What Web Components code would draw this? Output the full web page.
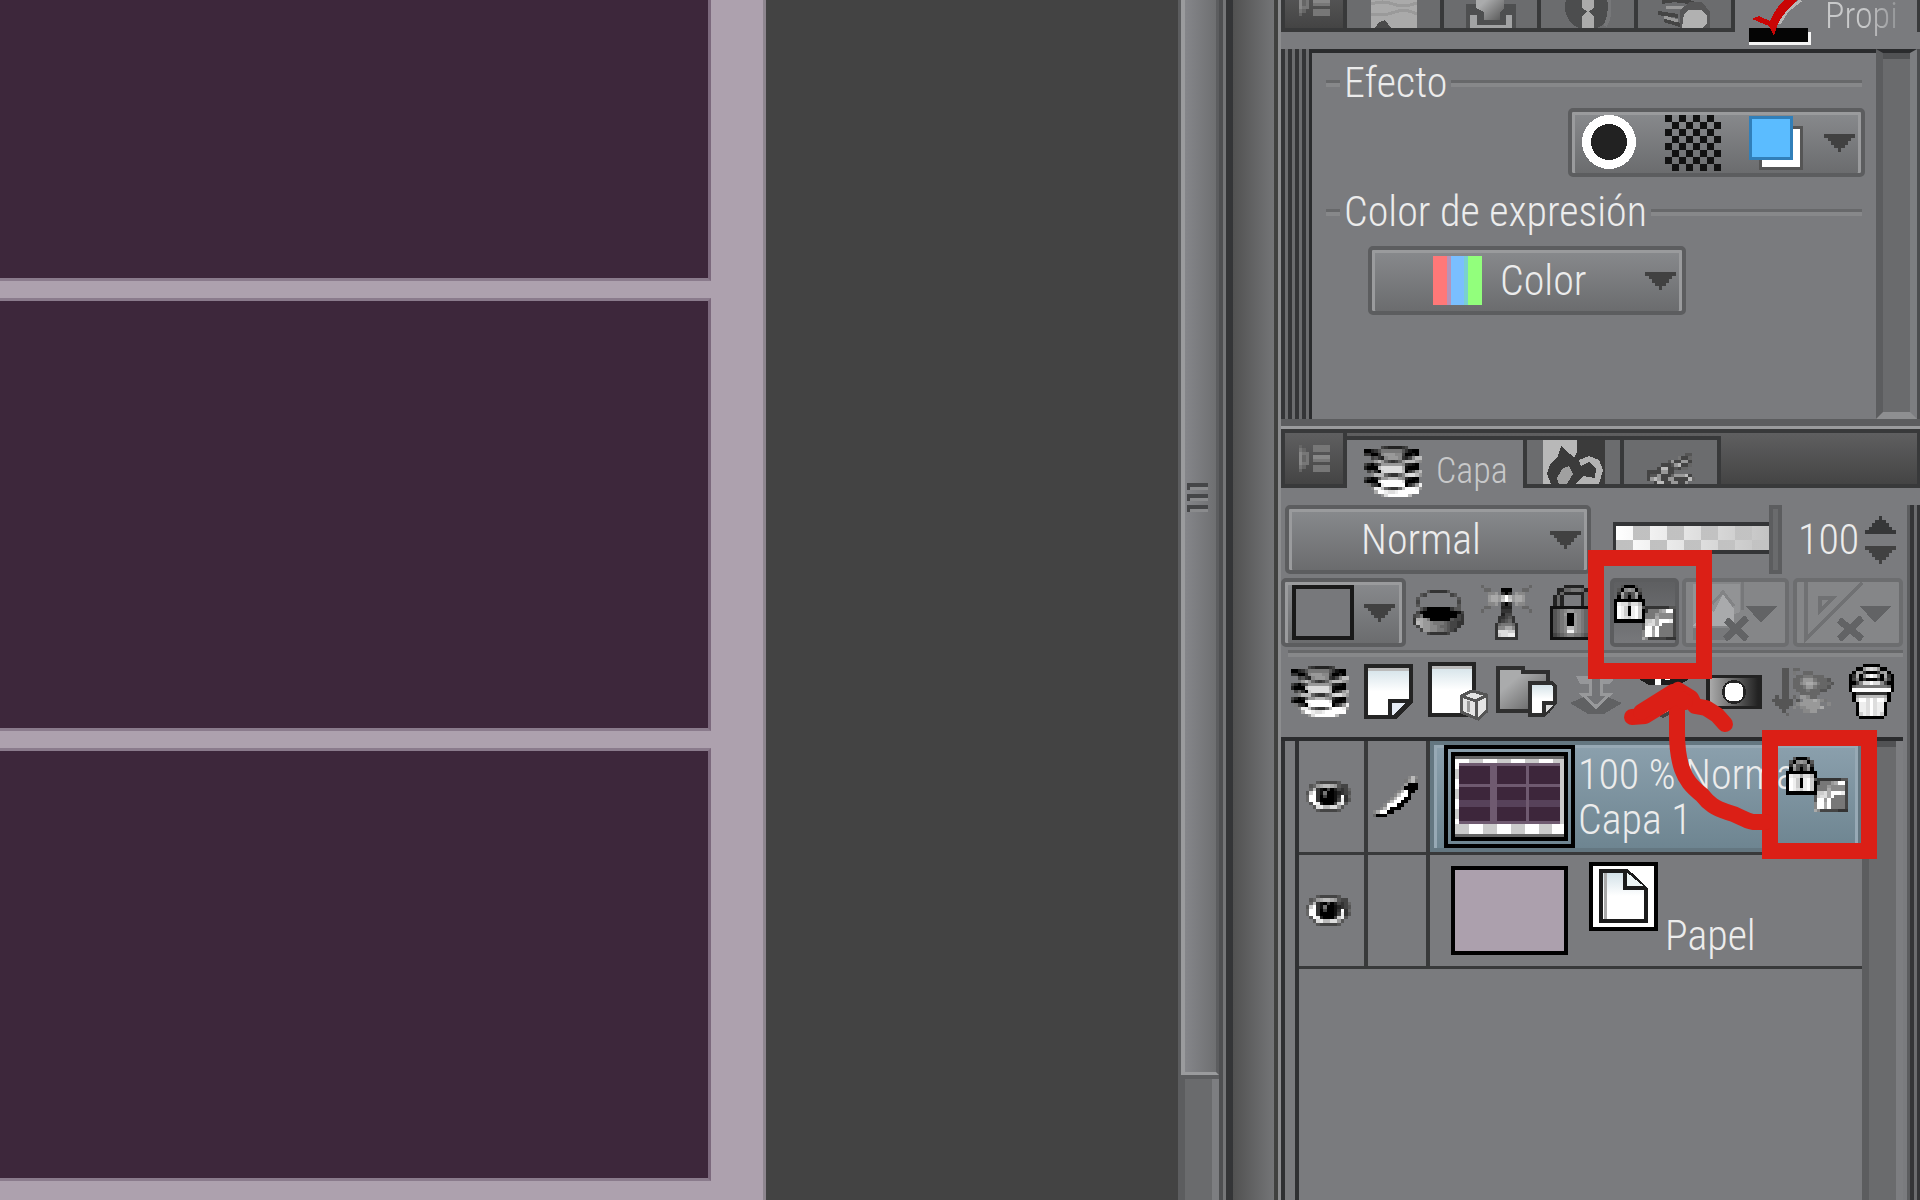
<!DOCTYPE html>
<html lang="es">
<head>
    <meta charset="utf-8">
    <title>Capa</title>
    <style>
        body {
            margin: 0;
            background: #434343;
            color: #ececec;
            font: 350 42px/48px "Liberation Sans Narrow", "Roboto Condensed", "Liberation Sans", sans-serif;
            overflow: hidden;
        }
    </style>
</head>

<body>
    <paint-app></paint-app>
</body>

<script>
    (function () {

        // one icon cell is 24/7 of a pixel, hex digits are grey levels
        const CELL = 24 / 7;

        const PIXELS = {
            eye: [
                '...5444445...',
                '.569abba9544.',
                '.6b3104024346',
                '5cf3170012345',
                '6ff3040013f36',
                '6ff3000014e35',
                '.5fe20004ce5.',
                '..5debbdd95..',
                '...5444445...',
            ],
            pen: [
                '..........8b8',
                '.........79b7',
                '.........9000',
                '........80000',
                '.......8bf00.',
                '......8bff0..',
                '.....8bff00..',
                '....8bff00...',
                '...8fff00....',
                '..8bf000.....',
                '8aff00.......',
                '6000.........',
            ],
            lockAlpha: [
                '..50005...........',
                '.5089805..........',
                '.3a535a3..........',
                '.0950590..........',
                '000000000.........',
                '0eddaddb0.........',
                '0fec0efc5333333355',
                '0fec0efc037779aff4',
                '0fec0efc0777988884',
                '0fedcefc0777a88884',
                '000000000ccdafffe4',
                '........5cddaf7774',
                '........5ff9f77774',
                '........8ffaf77774',
                '........8ffaf77774',
                '........a844444333',
            ],
            stack: [
                '.....43222234....',
                '0023577777753100.',
                '3300389998840020.',
                '..4532899983248bb',
                '..79b9643469bbb98',
                '4203599999983210.',
                '2000bdddddda1000.',
                '.4630cdddddb0359b',
                '..8bbb643368cddb9',
                '4201599bbb983100.',
                '2000dffffffd1001.',
                '.7430effffff0359e',
                '..8eeb64336bfffe9',
                '...affeddeffffff.',
                '.....9dffffffb...',
            ],
            menu: [
                '6...77777',
                '76..77777',
                '877......',
                '867.88888',
                '867.77777',
                '877......',
                '76..77777',
                '6...77777',
            ],
            pot: [
                '....5333335....',
                '..54.......45..',
                '.5...........5.',
                '.4...........4.',
                '.5...........5.',
                '..530000000355.',
                '.41000000000014',
                '457000000000043',
                '3aa970000005443',
                '3ba998777654433',
                '.4a99887665443.',
                '..49988776543..',
                '....4333334....',
            ],
            beacon: [
                '6.............6',
                '.66...000...66.',
                '..889.303.988..',
                '..9aa9bfb9aa9..',
                '..9aa9cfc9aa9..',
                '..889.303.988..',
                '.66...222...66.',
                '6.....333.....6',
                '......244......',
                '.....33453.....',
                '.....34563.....',
                '....3677763....',
                '....388aa83....',
                '....3dddcc3....',
                '....3cddee3....',
                '....3333333....',
            ],
            lock: [
                '....222222....',
                '..2266777622..',
                '..2622222262..',
                '.262.....262..',
                '.262.....262..',
                '.262.....262..',
                '11111111111111',
                '15678998876541',
                '15679009876541',
                '15678009876541',
                '15678009876541',
                '15678009876541',
                '15678bb9876541',
                '15678ee9876541',
                '14567887765441',
                '11111111111111',
            ],
            trash: [
                '....00000....',
                '..009cdc900..',
                '.0a9300039a0.',
                '03a08dfd80a30',
                '0480300030840',
                '0048ddfdd8400',
                '0677777777760',
                '0fffffffffff0',
                '.03333333330.',
                '.0abbbbbbba0.',
                '.0cffdfdffc0.',
                '..0eedfdee0..',
                '..0eedfdee0..',
                '..0eedfdee0..',
                '..0cedfdec0..',
                '...0000000...',
            ],
            apply: [
                '...55.66..........',
                '...55.7..666......',
                '...55..66777666...',
                '...55.66799976665.',
                '...55.6689aa976665',
                '...55.66679976665.',
                '...55..666766655..',
                '...55...666666....',
                '.5.55.6.99866.....',
                '555555.5.999a987..',
                '.55555.8999999..8.',
                '..555.8.889999a...',
                '...5.....8899.....',
                '....6.............',
            ],
            brush: [
                '...........55.',
                '.........7446.',
                '......5944994.',
                '....44459b446.',
                '...4bb445466..',
                '44449944......',
                '45594446999b4.',
                '49b944994444b6',
                '..4bb4499449..',
            ],
        };

        const DRAWN = {
            page: {
                w: 49, h: 55,
                body: `<path d="M2 2H47V38L32 53H2Z" fill="url(#sky)" stroke="#242424" stroke-width="4"/>
                    <path d="M4 5H45" stroke="#bbb" stroke-width="3"/><path d="M26 53V37H47L30 53Z" fill="#e6ecf5" stroke="#242424" stroke-width="4"/>`,
            },
            pageVector: {
                w: 60, h: 59,
                body: `<path d="M2 2H46V53H2Z" fill="url(#sky)" stroke="#242424" stroke-width="4"/><path d="M4 5H44" stroke="#bbb" stroke-width="3"/>
                    <path d="M33 34L44 29L59 33V49L50 57L33 50Z" fill="#e4e4e4" stroke="#555" stroke-width="3"/><path d="M33 34L48 39L59 33M48 39V57" fill="none" stroke="#555" stroke-width="3"/><path d="M40 39V50" stroke="#999" stroke-width="3"/>`,
            },
            folder: {
                w: 62, h: 52,
                body: `<path d="M2 2H27V6H52V45H2Z" fill="url(#metal)" stroke="#2f2f2f" stroke-width="4"/>
                    <path d="M34 17H56L59 20V37L48 49H34Z" fill="url(#sky)" stroke="#2f2f2f" stroke-width="4"/><path d="M48 49V37H59" fill="#ddd" stroke="#2f2f2f" stroke-width="4"/>`,
            },
            merge: {
                w: 52, h: 52,
                body: `<path d="M0 37L14 31H38L52 37L34 48H18Z" fill="#606163"/><path d="M6 10L46 10L40 18H10Z" fill="#96979a"/>
                    <path d="M20 4H31V28H40L26 41L12 28H20Z" fill="#737477" stroke="#98999b" stroke-width="3"/>`,
            },
            mask: {
                w: 56, h: 52,
                body: `<path d="M0 12L10 6H46L54 12L42 19H12Z" fill="#1c1c1c"/><path d="M18 2H24V19H18ZM28 4H33V14H28Z" fill="#fff"/><path d="M12 36H40L34 48L26 52L16 46Z" fill="#444"/><path d="M18 36H34V44L26 48L18 44Z" fill="#fff"/>`,
            },
            maskArea: {
                w: 56, h: 34,
                body: `<rect width="56" height="34" fill="#222"/><rect x="4" y="3" width="48" height="28" fill="url(#fade)"/><circle cx="28" cy="17" r="12" fill="#222"/><rect x="19" y="8" width="18" height="18" rx="6" fill="#fff"/>`,
            },
            ruler: {
                w: 88, h: 62,
                body: `<path d="M1 48V2H48V30" fill="#929395"/><path d="M50 0V28" stroke="#77787a" stroke-width="3"/><path d="M1 44L16 28L22 30L31 12L42 27V44Z" fill="#a9aaac"/>
                    <path d="M1 46H38V58H1Z" fill="#77787a"/><path d="M20 22L31 10L42 24" fill="none" stroke="#828385" stroke-width="3"/><path d="M34 38L55 57M55 36L33 57" stroke="#626365" stroke-width="7"/><path d="M54 24H85L69 41Z" fill="#626365"/>`,
            },
            snap: {
                w: 88, h: 62,
                body: `<path d="M2 0V57L58 1" fill="none" stroke="#707173" stroke-width="4"/><path d="M16 16H29L16 29Z" fill="none" stroke="#707173" stroke-width="4"/>
                    <path d="M35 38L58 57M58 36L35 57" stroke="#626365" stroke-width="7"/><path d="M56 24H87L71 41Z" fill="#626365"/>`,
            },
            ring: {
                w: 55, h: 55,
                body: `<circle cx="27" cy="27" r="27" fill="#fff"/><circle cx="27" cy="27" r="18" fill="#222"/>`,
            },
            tone: {
                w: 56, h: 56,
                body: Array.from({ length: 64 }, (_, i) => [i % 8, Math.floor(i / 8)]).filter(([x, y]) => (x + y) % 2 === 0)
                    .map(([x, y]) => `<rect x="${x * 7}" y="${y * 7}" width="7" height="7" fill="#111"/>`).join(''),
            },
            layerColor: {
                w: 55, h: 55,
                body: `<rect x="12" y="12" width="41" height="41" fill="#fff" stroke="#555" stroke-width="3"/><rect x="2" y="2" width="41" height="41" fill="#5bbcff" stroke="#317fb9" stroke-width="3"/>`,
            },
            rgb: {
                w: 49, h: 49,
                body: `<path fill="#ff7878" d="M0 0h14v49H0z"/><path fill="#b793b8" d="M14 0h4v49h-4z"/><path fill="#7abfff" d="M18 0h13v49H18z"/><path fill="#7ad0d0" d="M31 0h4v49h-4z"/><path fill="#92ff7c" d="M35 0h14v49H35z"/>`,
            },
            swatch: {
                w: 62, h: 55,
                body: `<rect x="2" y="2" width="58" height="51" fill="#77787b" stroke="#191919" stroke-width="4"/>`,
            },
            down: {
                w: 31, h: 18,
                body: `<path d="M0 0H31V4H27V7H24V11H21V14H17V18H14V14H10V11H7V7H4V4H0Z" fill="#414141"/>`,
            },
            up: {
                w: 31, h: 18,
                body: `<path d="M0 18H31V14H27V11H24V7H21V4H17V0H14V4H10V7H7V11H4V14H0Z" fill="#363738"/>`,
            },
            sheet: {
                w: 69, h: 69,
                body: `<rect x="2" y="2" width="65" height="65" fill="#fff" stroke="#000" stroke-width="4"/><path d="M12 9H38L57 27V59H12Z" fill="url(#sky)" stroke="#1c1c1c" stroke-width="4"/>
                    <path d="M16 11V57" stroke="#aaa" stroke-width="3"/><path d="M36 9V26H57" fill="#edf5f6" stroke="#1c1c1c" stroke-width="4"/>`,
            },
            check: {
                w: 62, h: 72,
                body: `<path d="M0 64H58V58H62V71H0Z" fill="#f5f5f5"/><rect y="54" width="59" height="14" fill="#050505"/>
                    <path d="M30 50L38 37L52 26" fill="none" stroke="#b8b8b8" stroke-width="3"/><path d="M3 45L10 42L21 47C28 30 38 22 50 20L54 22C44 30 34 38 28 52L25 62L20 52Z" fill="#c90505"/>`,
            },
            photo: {
                w: 46, h: 44,
                body: `<rect width="46" height="44" fill="#aaa"/><path d="M0 20Q12 16 22 20T46 19M0 30Q14 32 24 28T46 30" fill="none" stroke="#9a9a9a" stroke-width="3"/><path d="M4 44L8 38L14 36L20 44Z" fill="#4a4a4a"/>`,
            },
            stamp: {
                w: 50, h: 50,
                body: `<path d="M0 26H10V10H38V26H50V50H0Z" fill="#4e4f50"/><path d="M4 37H11V47H40V37H46V50H4Z" fill="#a2a3a4"/><path d="M10 16H38V31L34 34V42H18V34L10 30Z" fill="url(#metal)"/>`,
            },
            info: {
                w: 46, h: 50,
                body: `<circle cx="23" cy="29" r="23" fill="#4c4d4e"/><path d="M17 18H29V30L23 34L17 30ZM17 38L23 33L29 38V50H17Z" fill="#ababab"/><path d="M42 14C46 24 46 38 40 48" fill="none" stroke="#767779" stroke-width="4"/>`,
            },
            spray: {
                w: 54, h: 50,
                body: `<path d="M4 24Q18 20 38 26M0 35L20 38M6 42L22 47" fill="none" stroke="#444" stroke-width="4"/><path d="M8 29L30 30M6 39L20 43" stroke="#999" stroke-width="3"/><path d="M22 32L32 24H44L52 34V50H22Z" fill="#565657"/><path d="M26 36L31 32H44L49 38V46L44 50H24Z" fill="#b1b1b1"/>`,
            },
            history: {
                w: 62, h: 44,
                body: `<rect width="62" height="44" fill="#3b3b3b"/><path d="M0 0H34V12L31 18L27 14L18 6L15 16L7 24L4 34L8 44H0Z" fill="#b8b8b8"/>
                    <path d="M14 38L20 28L26 26L30 34L24 44H16Z" fill="#a0a0a0"/><path d="M36 20L46 16L56 20L60 30L56 44H32L40 36L52 38L53 28L46 22L38 26Z" fill="#b3b3b3"/>`,
            },
        };

        const defs = `<defs>
            <linearGradient id="sky" x1="0" y1="0" x2="0" y2="1"><stop offset="0" stop-color="#cfdfe6"/><stop offset=".5" stop-color="#fff"/></linearGradient>
            <linearGradient id="metal" x1="0" y1="0" x2="1" y2="1"><stop offset=".3" stop-color="#aaabac"/><stop offset="1" stop-color="#555"/></linearGradient>
            <linearGradient id="fade"><stop offset="0" stop-color="#aaa"/><stop offset="1" stop-color="#222"/></linearGradient>
        </defs>`;

        function define(name, html, setup) {
            const template = document.createElement('template');
            template.innerHTML = `<style>:host { display: block; box-sizing: border-box; } *, *::before { box-sizing: border-box; }</style>` + html;

            window.customElements.define(name, class extends HTMLElement {
                constructor() {
                    super();
                    this.attachShadow({ mode: 'open' });
                    this.shadowRoot.appendChild(template.content.cloneNode(true));
                }

                connectedCallback() {
                    if (setup)
                        setup(this, this.shadowRoot);
                }
            });
        }

        define('ui-icon', `
            <style>
                :host { display: block; flex: none; }
                svg { display: block; shape-rendering: crispEdges; }
            </style>
            <span></span>
        `, (host, root) => {
            const name = host.getAttribute('name');
            const rows = PIXELS[name];
            let w, h, box, body;
            if (rows) {
                const cols = rows[0].length;
                w = Math.round(cols * CELL);
                h = Math.round(rows.length * CELL);
                box = `${cols} ${rows.length}`;
                body = rows.map((row, y) => [...row].map((c, x) =>
                    c === '.' ? '' : `<rect x="${x}" y="${y}" width="1" height="1" fill="#${c}${c}${c}"/>`).join('')).join('');
            } else {
                ({ w, h, body } = DRAWN[name]);
                box = `${w} ${h}`;
                body = defs + body;
            }
            root.querySelector('span').innerHTML =
                `<svg width="${w}" height="${h}" viewBox="0 0 ${box}" preserveAspectRatio="none" aria-hidden="true">${body}</svg>`;
        });

        // bevelled frame shared by drop-downs and button groups
        define('bevel-box', `
            <style>
                :host {
                    position: relative;
                    display: flex;
                    align-items: center;
                    height: 69px;
                    flex: none;
                    border: 4px solid #5c5d5f;
                    border-radius: 5px;
                    background: linear-gradient(#888a8d, #6b6c6e);
                    box-shadow: inset 3px 0 #9a9b9d, inset -3px 0 #9a9b9d, inset 0 3px #9a9b9d;
                }
                :host([flat]) { background: #858688; border-color: #6c6d6f; box-shadow: none; }
                :host([pressed]) { background: linear-gradient(#5e5f61, #77787b); box-shadow: none; }
            </style>
            <slot></slot>
        `);

        define('drop-down', `
            <style>
                bevel-box { width: 100%; }
                select {
                    appearance: none;
                    width: 100%;
                    height: 100%;
                    border: 0;
                    outline: 0;
                    background: none;
                    color: inherit;
                    font: inherit;
                    padding: 0 0 0 var(--indent);
                }
                .arrow { position: absolute; right: 6px; pointer-events: none; }
                .lead { display: block; position: absolute; left: 61px; pointer-events: none; }
            </style>
            <bevel-box>
                <slot class="lead"></slot>
                <select><option></option></select>
                <ui-icon class="arrow" name="down"></ui-icon>
            </bevel-box>
        `, (host, root) => {
            root.querySelector('option').textContent = host.getAttribute('value');
            root.querySelector('select').setAttribute('aria-label', host.getAttribute('label'));
        });

        define('icon-button', `
            <style>
                :host { flex: none; width: 69px; height: 69px; }
                button {
                    display: flex;
                    align-items: center;
                    justify-content: center;
                    gap: 10px;
                    width: 100%;
                    height: 100%;
                    padding: 0;
                    border: 0;
                    background: none;
                }
            </style>
            <button type="button"><slot></slot></button>
        `, (host, root) => {
            root.querySelector('button').setAttribute('aria-label', host.getAttribute('label'));
            root.querySelector('button').disabled = host.hasAttribute('disabled');
        });

        define('group-box', `
            <style>
                header { display: flex; align-items: center; gap: 4px; white-space: nowrap; }
                header::before { content: ""; width: 14px; }
                header::before, i { height: 7px; background: linear-gradient(#67686a 50%, #87888a 50%); }
                i { flex: 1; }
            </style>
            <header><span></span><i></i></header>
            <slot></slot>
        `, (host, root) => {
            root.querySelector('span').textContent = host.getAttribute('label');
        });

        define('scroll-rail', `
            <style>
                :host {
                    flex: none;
                    width: 41px;
                    border-left: 7px solid #5c5d5f;
                    border-right: 7px solid #7d7e81;
                    background: #6a6b6d;
                    box-shadow: inset 0 6px #515254;
                }
            </style>
        `);

        define('palette-tab', `
            <style>
                :host { flex: none; width: 97px; height: 52px; }
                button {
                    display: flex;
                    align-items: flex-end;
                    justify-content: center;
                    gap: 14px;
                    width: 100%;
                    height: 100%;
                    padding: 0;
                    border: solid #38393a;
                    border-width: 4px 4px 4px 0;
                    background: #6b6c6e;
                    color: #c8c9ca;
                    font: 350 36px/40px "Liberation Sans Narrow", "Roboto Condensed", "Liberation Sans", sans-serif;
                }
                :host([active]) { width: 180px; }
                :host([active]) button {
                    align-items: center;
                    justify-content: flex-start;
                    padding: 14px 0 0 17px;
                    background: #7a7b7e;
                    border-bottom: 0;
                }
                :host([cut]) { flex: 1; min-width: 0; overflow-x: clip; }
                :host([cut]) button {
                    align-items: flex-end;
                    padding: 0 0 0 14px;
                    border-right: 0;
                }
                :host([cut]) ::slotted(span) {
                    -webkit-mask: linear-gradient(90deg, #000 40px, transparent 90px);
                    margin-bottom: -4px;
                }
                :host([cut]) ::slotted(ui-icon) { margin-bottom: -14px; }
            </style>
            <button type="button" role="tab"><slot></slot></button>
        `);

        define('palette-tabs', `
            <style>
                :host {
                    display: flex;
                    align-items: flex-end;
                    height: 55px;
                    flex: none;
                    border-right: 3px solid #38393a;
                    background: linear-gradient(#5f5f60, #444 51px, #38393a 51px);
                }
                :host([cropped]) { height: 32px; background: #7a7b7e; }
                .menu {
                    display: flex;
                    flex: none;
                    width: 66px;
                    height: 55px;
                    padding: 12px 0 0 14px;
                    border: solid #38393a;
                    border-width: 0 4px 4px;
                    background: linear-gradient(#5f5f60, #444);
                }
            </style>
            <button class="menu" type="button" aria-label="Menú"><ui-icon name="menu"></ui-icon></button>
            <slot></slot>
        `);

        define('property-palette', `
            <style>
                :host { flex: none; background: #7a7b7e; }
                .body { display: flex; height: 370px; margin-top: 17px; border-right: 3px solid #4c4d4f; }
                .grip { width: 28px; flex: none; background: repeating-linear-gradient(90deg, #343537 0 4px, #6b6c6e 4px 7px); }
                .fields {
                    flex: 1;
                    display: flex;
                    flex-direction: column;
                    gap: 11px;
                    padding: 6px 14px 0;
                    border: solid #2a2b2d;
                    border-width: 4px 0 0 3px;
                }
                .effects { display: flex; gap: 28px; width: 297px; margin: 1px -3px 0 auto; padding-left: 10px; }
                .effects icon-button { width: 55px; height: 55px; }
                .effects icon-button:last-child { width: 31px; margin-left: -7px; }
                drop-down { width: 318px; margin: 10px 0 0 42px; --indent: 128px; }
                scroll-rail { border-top: 4px solid #2a2b2d; border-bottom: 7px solid #8e8f91; }
                .foot { height: 10px; background: linear-gradient(#5c5d5f 7px, #9a9b9d 7px); }
            </style>
            <palette-tabs cropped>
                <palette-tab><ui-icon name="photo"></ui-icon></palette-tab>
                <palette-tab><ui-icon name="stamp"></ui-icon></palette-tab>
                <palette-tab><ui-icon name="info"></ui-icon></palette-tab>
                <palette-tab><ui-icon name="spray"></ui-icon></palette-tab>
                <palette-tab active cut><ui-icon name="check"></ui-icon><span>Propi</span></palette-tab>
            </palette-tabs>
            <div class="body">
                <div class="grip"></div>
                <div class="fields">
                    <group-box label="Efecto">
                        <bevel-box class="effects">
                            <icon-button label="Borde"><ui-icon name="ring"></ui-icon></icon-button>
                            <icon-button label="Trama"><ui-icon name="tone"></ui-icon></icon-button>
                            <icon-button label="Color de capa"><ui-icon name="layerColor"></ui-icon></icon-button>
                            <icon-button label="Más efectos"><ui-icon name="down"></ui-icon></icon-button>
                        </bevel-box>
                    </group-box>
                    <group-box label="Color de expresión">
                        <drop-down label="Color de expresión" value="Color"><ui-icon name="rgb"></ui-icon></drop-down>
                    </group-box>
                </div>
                <scroll-rail></scroll-rail>
            </div>
            <div class="foot"></div>
        `);

        define('opacity-slider', `
            <style>
                :host { display: flex; align-items: center; flex: 1; min-width: 0; }
                input { appearance: none; margin: 0; background: none; }
                .range { width: 169px; height: 69px; flex: none; }
                .range::-webkit-slider-runnable-track {
                    height: 69px;
                    background:
                        linear-gradient(#343537, #343537) 0 17px / 156px 4px no-repeat,
                        linear-gradient(#343537, #343537) 0 45px / 156px 4px no-repeat,
                        linear-gradient(#343537, #343537) 0 17px / 3px 32px no-repeat,
                        linear-gradient(90deg, transparent, #c3c3c3) 3px 21px / 153px 24px no-repeat,
                        conic-gradient(#c0c0c0 25%, #fff 0 50%, #c0c0c0 0 75%, #fff 0) 3px 21px / 34px 28px repeat-x;
                }
                .range::-webkit-slider-thumb {
                    appearance: none;
                    width: 13px;
                    height: 69px;
                    border: 4px solid #5c5d5f;
                    background: #6a6b6d;
                }
                .value { width: 67px; padding: 0; border: 0; margin-left: 16px; font: inherit; color: inherit; outline: 0; }
                .spin { display: flex; flex-direction: column; gap: 12px; }
                .spin icon-button { width: 31px; height: 18px; }
            </style>
            <input class="range" type="range" min="0" max="100" value="100" aria-label="Opacidad">
            <input class="value" type="text" value="100" aria-label="Valor de opacidad">
            <div class="spin">
                <icon-button label="Subir"><ui-icon name="up"></ui-icon></icon-button>
                <icon-button label="Bajar"><ui-icon name="down"></ui-icon></icon-button>
            </div>
        `);

        define('layer-row', `
            <style>
                :host { display: flex; height: 114px; border-bottom: 3px solid #38393a; }
                .cell { display: flex; flex: none; width: 69px; border-right: 4px solid #38393a; }
                .cell.tool { width: 62px; }
                .cell icon-button { width: 58px; height: 100%; }
                slot[name] { display: block; height: 100%; }
                ::slotted([slot=tool]) { width: 54px; height: 100%; }
                .main { position: relative; display: flex; flex: 1; min-width: 0; padding: 7px 0 0 17px; border: 4px solid transparent; }
                :host([selected]) .main {
                    padding: 0 76px 0 10px;
                    background: linear-gradient(#8ba0ad, #6e8591);
                    border-color: #647781;
                    box-shadow: inset 3px 0 #97a9b5, inset 0 3px #97a9b5, inset -3px 0 #97a9b5;
                }
            </style>
            <div class="cell"><icon-button label="Visible"><ui-icon name="eye"></ui-icon></icon-button></div>
            <div class="cell tool"><slot name="tool"></slot></div>
            <div class="main"><slot></slot></div>
        `);

        define('layer-palette', `
            <style>
                :host { display: flex; flex-direction: column; flex: 1; min-height: 0; background: #7a7b7e; border-top: 4px solid #38393a; }
                .body { display: flex; flex: 1; min-height: 0; padding-top: 17px; }
                .rails { flex: none; width: 17px; background: linear-gradient(90deg, #7a7b7e 4px, #5c5d5f 4px 7px, #343537 7px 11px, #6b6c6e 11px 14px, #343537 14px); }
                .content { display: flex; flex-direction: column; flex: 1; min-width: 0; }
                .row { display: flex; flex: none; }
                .blend { gap: 22px; padding-left: 4px; }
                drop-down { width: 306px; --indent: 72px; }
                .modes { margin-top: 4px; }
                .modes > icon-button { width: 68px; padding-right: 4px; }
                .modes bevel-box icon-button { width: 100%; height: 100%; }
                .color { width: 125px; }
                .locked { width: 69px; }
                .ruler { width: 107px; margin: 0 4px 0 3px; }
                .snap { flex: 1; min-width: 0; }
                hr { width: calc(100% - 7px); height: 7px; margin: 3px 0 0 auto; border: 0; background: linear-gradient(#67686a 50%, #87888a 50%); }
                .tools { height: 80px; padding-left: 4px; }
                .list { display: flex; flex: 1; min-height: 0; border: solid #2a2b2d; border-width: 4px 0 0; }
                .gutter { flex: none; width: 18px; border: solid #2f3032; border-width: 0 4px; }
                .layers { flex: 1; min-width: 0; }
                .frame { flex: none; width: 131px; height: 103px; padding: 3px; border: 4px solid #000; }
                .thumb { width: 117px; height: 89px; border: 4px solid #000; background: #aca0ad; flex: none; }
                .frame .thumb { background: #666; padding: 3px 0; }
                svg { display: block; width: 100%; height: 100%; }
                .text { flex: 1; min-width: 0; padding-top: 7px; margin-left: 3px; line-height: 45px; white-space: nowrap; }
                .flag { position: absolute; right: 10px; top: 12px; }
                .paper { margin-left: 21px; margin-top: -4px; }
                .name { align-self: flex-end; margin: 0 0 2px 7px; }
            </style>
            <palette-tabs>
                <palette-tab active><ui-icon name="stack"></ui-icon><span>Capa</span></palette-tab>
                <palette-tab><ui-icon name="history"></ui-icon></palette-tab>
                <palette-tab><ui-icon name="brush"></ui-icon></palette-tab>
            </palette-tabs>
            <div class="body">
                <div class="content">
                    <div class="row blend">
                        <drop-down label="Modo de fusión" value="Normal"></drop-down>
                        <opacity-slider></opacity-slider>
                    </div>
                    <div class="row modes">
                        <bevel-box class="color"><icon-button label="Color de paleta"><ui-icon name="swatch"></ui-icon><ui-icon name="down"></ui-icon></icon-button></bevel-box>
                        <icon-button label="Recortar"><ui-icon name="pot"></ui-icon></icon-button>
                        <icon-button label="Referencia"><ui-icon name="beacon"></ui-icon></icon-button>
                        <icon-button label="Bloquear"><ui-icon name="lock"></ui-icon></icon-button>
                        <bevel-box pressed class="locked"><icon-button label="Bloquear píxeles transparentes"><ui-icon name="lockAlpha"></ui-icon></icon-button></bevel-box>
                        <bevel-box flat class="ruler"><icon-button disabled label="Máscara"><ui-icon name="ruler"></ui-icon></icon-button></bevel-box>
                        <bevel-box flat class="snap"><icon-button disabled label="Regla"><ui-icon name="snap"></ui-icon></icon-button></bevel-box>
                    </div>
                    <hr>
                    <div class="row tools">
                        <icon-button label="Capas"><ui-icon name="stack"></ui-icon></icon-button>
                        <icon-button label="Nueva capa"><ui-icon name="page"></ui-icon></icon-button>
                        <icon-button label="Nueva capa vectorial"><ui-icon name="pageVector"></ui-icon></icon-button>
                        <icon-button label="Nueva carpeta"><ui-icon name="folder"></ui-icon></icon-button>
                        <icon-button disabled label="Transferir"><ui-icon name="merge"></ui-icon></icon-button>
                        <icon-button label="Combinar"><ui-icon name="mask"></ui-icon></icon-button>
                        <icon-button label="Crear máscara"><ui-icon name="maskArea"></ui-icon></icon-button>
                        <icon-button disabled label="Aplicar máscara"><ui-icon name="apply"></ui-icon></icon-button>
                        <icon-button label="Eliminar"><ui-icon name="trash"></ui-icon></icon-button>
                    </div>
                    <div class="list">
                        <div class="gutter"></div>
                        <div class="layers">
                            <layer-row selected>
                                <icon-button slot="tool" label="Editar"><ui-icon name="pen"></ui-icon></icon-button>
                                <div class="frame"><div class="thumb">
                                    <svg viewBox="0 0 109 75" preserveAspectRatio="none" shape-rendering="crispEdges" aria-hidden="true">
                                        <defs><pattern id="cells" width="28" height="20" patternUnits="userSpaceOnUse"><rect width="28" height="20" fill="#cbcbcb"/><path d="M0 0h14v10H0z" fill="#fff"/></pattern></defs>
                                        <rect width="109" height="65" fill="url(#cells)"/>
                                        <path d="M0 65h109v10H0z" fill="#cbcbcb"/><path d="M14 65h14v10H14zM42 65h14v10H42zM70 65h14v10H70zM97 65h12v10H97z" fill="#fff"/>
                                        <rect x="4" y="4" width="101" height="61" fill="#6f5a70"/>
                                        <path d="M4 7h31v18H4zM42 7h29v18H42zM74 7h31v18H74zM4 28h31v13H4zM42 28h29v13H42zM74 28h31v13H74zM4 48h31v14H4zM42 48h29v14H42zM74 48h31v14H74z" fill="#3d263b"/>
                                        <path d="M4 41h31v7H4zM42 41h29v7H42zM74 41h31v7H74z" fill="#57425a"/>
                                    </svg>
                                </div></div>
                                <div class="text">100 % Normal<br>Capa 1</div>
                                <ui-icon class="flag" name="lockAlpha"></ui-icon>
                            </layer-row>
                            <layer-row>
                                <div class="thumb"></div>
                                <ui-icon class="paper" name="sheet"></ui-icon>
                                <span class="name">Papel</span>
                            </layer-row>
                        </div>
                        <scroll-rail></scroll-rail>
                    </div>
                </div>
                <div class="rails"></div>
            </div>
        `);

        // red pen marks over the palettes
        define('red-marks', `
            <style>
                :host { position: absolute; left: 300px; top: 540px; pointer-events: none; }
                svg { display: block; fill: none; stroke: #db1f16; stroke-width: 16; stroke-linecap: round; stroke-linejoin: round; }
                rect { stroke-linejoin: miter; }
            </style>
            <svg width="310" height="330" aria-hidden="true">
                <rect x="15" y="18" width="108" height="113"/>
                <rect x="189" y="198" width="99" height="113"/>
                <path d="M184 282H172C162 280 158 275 146 272C134 268 128 264 121 255C110 246 105 240 101 229C97 217 96 205 96 193V154"/>
                <path d="M51 177L64 176L82 165L97 150L110 158L114 166L125 168L136 175L144 184"/>
                <path d="M60 172L92 152M72 168L96 156L104 162"/>
            </svg>
        `);

        define('comic-canvas', `
            <style>
                :host { flex: 1; min-width: 0; background: #434343; }
                .sheet {
                    display: grid;
                    grid-template-rows: 281fr 434fr 434fr;
                    gap: 17px;
                    width: 65%;
                    height: 100%;
                    padding: 0 52px 19px 0;
                    border-right: 3px solid #8e868f;
                    background: #ada1ae;
                }
                .panel { background: #3d273b; border: solid #8a7b8c; border-width: 3px 3px 3px 0; border-right-color: #7c697d; }
                .panel:first-child { border-top: 0; }
            </style>
            <div class="sheet"><div class="panel"></div><div class="panel"></div><div class="panel"></div></div>
        `);

        define('canvas-scrollbar', `
            <style>
                :host {
                    display: flex;
                    flex-direction: column;
                    flex: none;
                    width: 45px;
                    border-left: 3px solid #5c5d5f;
                    border-right: 4px solid #4e4f51;
                    background: linear-gradient(90deg, #5c5d5f 4px, #6a6b6d 4px 31px, #7d7e81 31px);
                }
                .thumb {
                    display: flex;
                    flex-direction: column;
                    align-items: center;
                    justify-content: center;
                    gap: 4px;
                    height: calc(100% - 125px);
                    border: solid #9a9b9d;
                    border-width: 0 0 3px 4px;
                    border-right: 3px solid #5c5d5f;
                    box-shadow: 0 4px #5c5d5f;
                    background: linear-gradient(90deg, #85868a, #6e6f71);
                    padding: 0 6px 78px 0;
                }
                .thumb i { width: 21px; height: 7px; border: solid #454648; border-width: 4px 0 0 3px; background: #8a8b8d; }
            </style>
            <div class="thumb"><i></i><i></i><i></i></div>
        `);

        define('paint-app', `
            <style>
                :host { display: flex; height: 100vh; }
                .divider {
                    flex: none;
                    width: 58px;
                    background: linear-gradient(90deg, #757678 3px, #343537 3px 10px, #515151 10px, #747577 51px, #40413f 51px 55px, #8c8d8f 55px);
                }
                .dock { position: relative; display: flex; flex-direction: column; flex: none; width: 639px; }
            </style>
            <comic-canvas></comic-canvas>
            <canvas-scrollbar></canvas-scrollbar>
            <div class="divider"></div>
            <div class="dock">
                <property-palette></property-palette>
                <layer-palette></layer-palette>
                <red-marks></red-marks>
            </div>
        `);
    })();

</script>

</html>
